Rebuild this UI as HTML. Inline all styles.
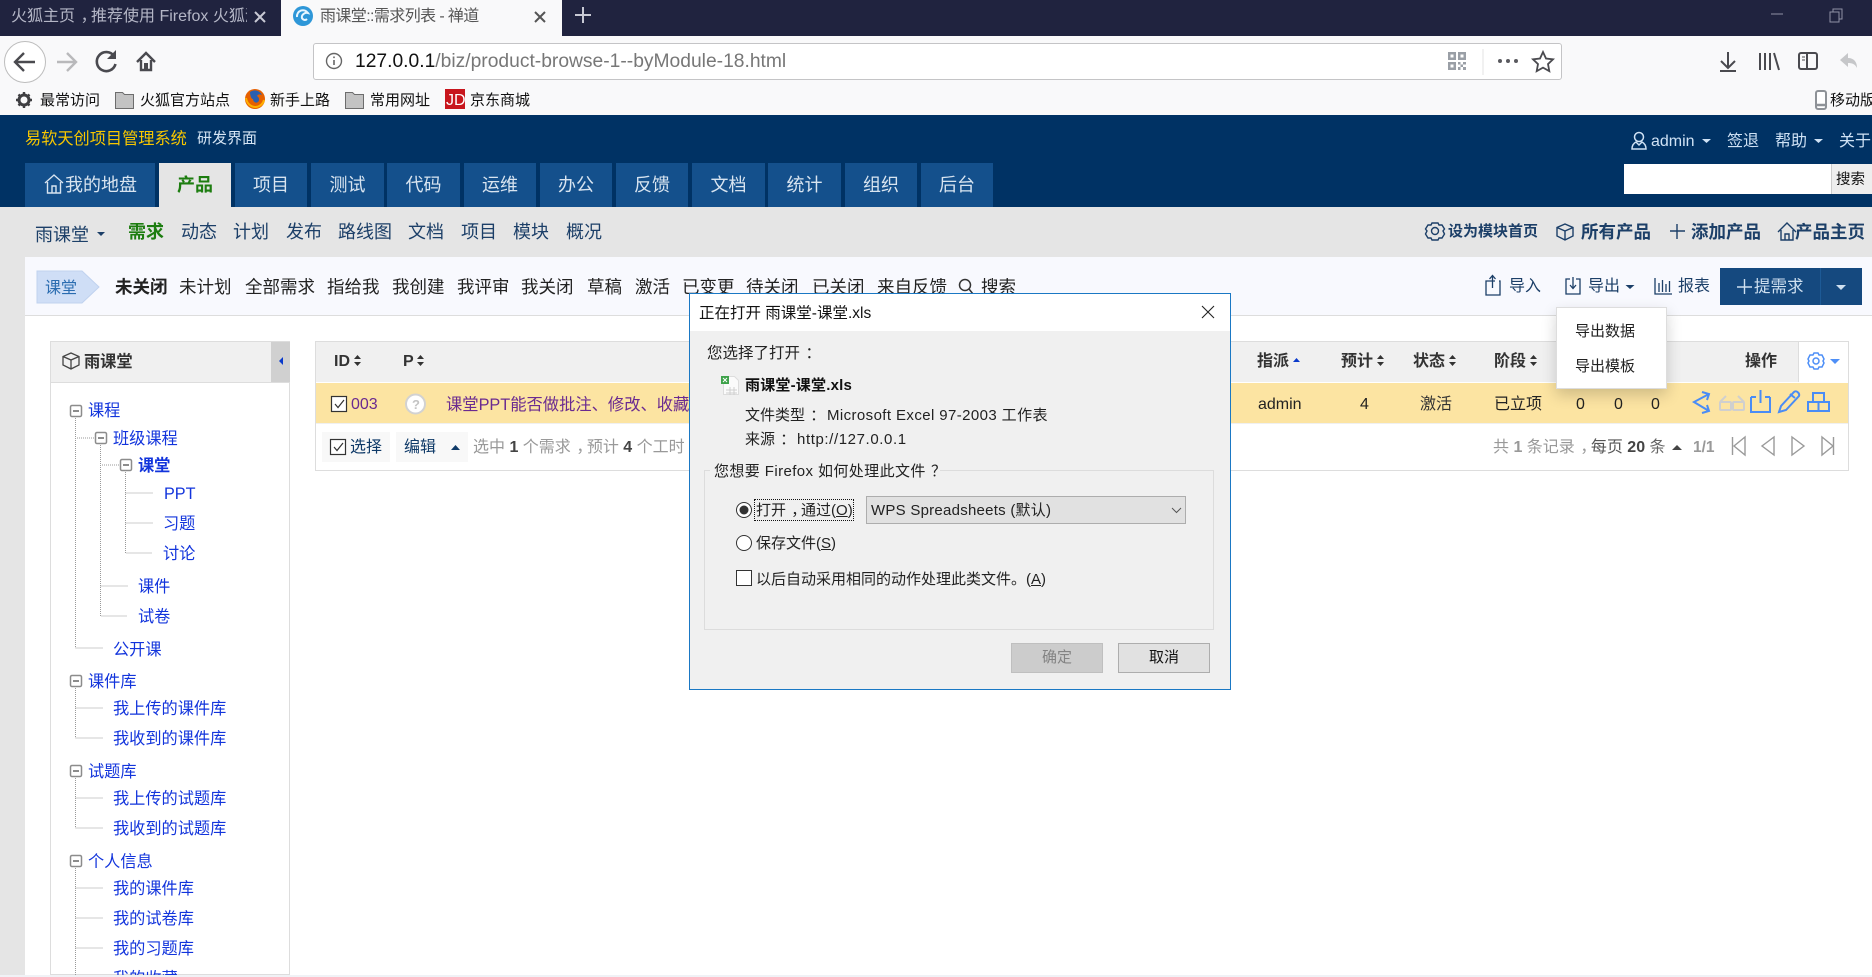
<!DOCTYPE html>
<html lang="zh-CN"><head><meta charset="utf-8"><title>雨课堂::需求列表 - 禅道</title>
<style>
html,body{margin:0;padding:0;width:1872px;height:977px;overflow:hidden;background:#fff}
body{position:relative;font-family:"Liberation Sans","Noto Sans CJK SC",sans-serif;font-size:16px;color:#333}
.b{position:absolute}
.t{position:absolute;white-space:nowrap;line-height:24px;height:24px;transform:translateY(1px)}
.n{background:#14508c;top:163px;height:44px;color:#d8e4f0;font-size:18px;line-height:44px;text-align:center;position:absolute}
.sn{color:#1c3f68;font-size:18px}
.ft{color:#222;font-size:17.5px;top:274px}
.tr{color:#1234dc;font-size:16.2px}
.hd{font-weight:bold;font-size:16px;color:#333;top:349px}
.d{font-size:15px;color:#222}
.bm{font-size:15px;color:#111;top:88px}
.c{display:inline-block;font-style:normal;transform:translateX(.35em)}
svg{position:absolute;left:0;top:0;overflow:visible}
</style></head><body>
<!-- browser chrome -->
<div class="b" style="left:0;top:0;width:1872px;height:36px;background:#20233f"></div>
<div class="b" style="left:281px;top:0;width:281px;height:36px;background:#f9f9fa"></div>
<div class="b" style="left:0;top:36px;width:1872px;height:79px;background:#f9f9fa"></div>
<div class="t" style="left:11px;top:4px;width:236px;overflow:hidden;font-size:16px;color:#b4b6c6">火狐主页<i class="c">，</i>推荐使用 Firefox 火狐浏览器</div>
<div class="t" style="left:320px;top:4px;font-size:16px;letter-spacing:-.6px;color:#555">雨课堂::需求列表 - 禅道</div>
<div class="b" style="left:313px;top:43px;width:1247px;height:35px;background:#fff;border:1px solid #c4c4c6;border-radius:3px"></div>
<div class="t" style="left:355px;top:49px;font-size:19.25px;color:#111">127.0.0.1<span style="color:#777">/biz/product-browse-1--byModule-18.html</span></div>
<div class="t bm" style="left:40px">最常访问</div>
<div class="t bm" style="left:140px">火狐官方站点</div>
<div class="t bm" style="left:270px">新手上路</div>
<div class="t bm" style="left:370px">常用网址</div>
<div class="t bm" style="left:470px">京东商城</div>
<div class="t bm" style="left:1830px">移动版</div>
<!-- header -->
<div class="b" style="left:0;top:115px;width:1872px;height:92px;background:#003264"></div>
<div class="t" style="left:25px;top:126px;font-size:16.2px;color:#f7c600">易软天创项目管理系统</div>
<div class="t" style="left:197px;top:126px;font-size:15px;color:#d6e6f5">研发界面</div>
<div class="t" style="left:1651px;top:129px;font-size:16px;color:#cfe2f5">admin</div>
<div class="t" style="left:1727px;top:129px;font-size:16px;color:#cfe2f5">签退</div>
<div class="t" style="left:1775px;top:129px;font-size:16px;color:#cfe2f5">帮助</div>
<div class="t" style="left:1839px;top:129px;font-size:16px;color:#cfe2f5">关于</div>
<div class="b" style="left:1624px;top:164px;width:207px;height:30px;background:#fff"></div>
<div class="b" style="left:1831px;top:164px;width:41px;height:30px;background:#eee;border-left:1px solid #ccc;box-sizing:border-box"></div>
<div class="t" style="left:1836px;top:167px;font-size:14.5px;color:#111">搜索</div>
<div class="n" style="left:25px;width:130px;text-indent:22px">我的地盘</div>
<div class="n" style="left:159px;width:72px;background:#e5e5e5;color:#1d7d10;font-weight:bold">产品</div>
<div class="n" style="left:235px;width:72px">项目</div>
<div class="n" style="left:311px;width:73px">测试</div>
<div class="n" style="left:387px;width:73px">代码</div>
<div class="n" style="left:464px;width:72px">运维</div>
<div class="n" style="left:540px;width:72px">办公</div>
<div class="n" style="left:616px;width:72px">反馈</div>
<div class="n" style="left:692px;width:73px">文档</div>
<div class="n" style="left:768px;width:73px">统计</div>
<div class="n" style="left:845px;width:72px">组织</div>
<div class="n" style="left:921px;width:72px">后台</div>
<!-- subnav -->
<div class="b" style="left:0;top:207px;width:1872px;height:770px;background:#e5e5e5"></div>
<div class="t sn" style="left:35px;top:222px">雨课堂</div>
<div class="t sn" style="left:128px;top:219px;color:#1d7d10;font-weight:bold">需求</div>
<div class="t sn" style="left:181px;top:219px">动态</div>
<div class="t sn" style="left:233px;top:219px">计划</div>
<div class="t sn" style="left:286px;top:219px">发布</div>
<div class="t sn" style="left:338px;top:219px">路线图</div>
<div class="t sn" style="left:408px;top:219px">文档</div>
<div class="t sn" style="left:461px;top:219px">项目</div>
<div class="t sn" style="left:513px;top:219px">模块</div>
<div class="t sn" style="left:566px;top:219px">概况</div>
<div class="t" style="left:1448px;top:219px;font-size:15px;font-weight:bold;color:#1c3f68">设为模块首页</div>
<div class="t sn" style="left:1581px;top:219px;font-weight:bold;font-size:17.5px">所有产品</div>
<div class="t sn" style="left:1691px;top:219px;font-weight:bold;font-size:17.5px">添加产品</div>
<div class="t sn" style="left:1795px;top:219px;font-weight:bold;font-size:17.5px">产品主页</div>
<!-- main -->
<div class="b" style="left:25px;top:257px;width:1847px;height:59px;background:#f8f9fe;border-bottom:1px solid #ddd;box-sizing:border-box"></div>
<div class="b" style="left:25px;top:316px;width:1847px;height:659px;background:#fff"></div>
<div class="b" style="left:0;top:975px;width:1872px;height:2px;background:#f0f2f6"></div>
<div class="t ft" style="left:115px;font-weight:bold">未关闭</div>
<div class="t ft" style="left:179px">未计划</div>
<div class="t ft" style="left:245px">全部需求</div>
<div class="t ft" style="left:327px">指给我</div>
<div class="t ft" style="left:392px">我创建</div>
<div class="t ft" style="left:457px">我评审</div>
<div class="t ft" style="left:521px">我关闭</div>
<div class="t ft" style="left:587px">草稿</div>
<div class="t ft" style="left:635px">激活</div>
<div class="t ft" style="left:682px">已变更</div>
<div class="t ft" style="left:746px">待关闭</div>
<div class="t ft" style="left:812px">已关闭</div>
<div class="t ft" style="left:877px">来自反馈</div>
<div class="t ft" style="left:981px">搜索</div>
<div class="t" style="left:1509px;top:274px;font-size:16px;color:#1c3f68">导入</div>
<div class="t" style="left:1588px;top:274px;font-size:16px;color:#1c3f68">导出</div>
<div class="t" style="left:1678px;top:274px;font-size:16px;color:#1c3f68">报表</div>
<div class="b" style="left:1720px;top:268px;width:142px;height:37px;background:#15497f"></div>
<div class="t" style="left:1754px;top:274px;font-size:16.5px;color:#cfe0f0">提需求</div>
<!-- sidebar -->
<div class="b" style="left:50px;top:341px;width:240px;height:634px;border:1px solid #ddd;box-sizing:border-box"></div>
<div class="b" style="left:50px;top:341px;width:240px;height:42px;background:#f0f0f0;border:1px solid #ddd;box-sizing:border-box"></div>
<div class="b" style="left:271px;top:342px;width:19px;height:40px;background:#d0d0d0"></div>
<div class="t" style="left:84px;top:349px;font-size:16.2px;font-weight:bold;color:#333">雨课堂</div>
<div class="t tr" style="left:88px;top:398px">课程</div>
<div class="t tr" style="left:113px;top:426px">班级课程</div>
<div class="t tr" style="left:138px;top:453px;font-weight:bold">课堂</div>
<div class="t tr" style="left:164px;top:481px">PPT</div>
<div class="t tr" style="left:163px;top:511px">习题</div>
<div class="t tr" style="left:163px;top:541px">讨论</div>
<div class="t tr" style="left:138px;top:574px">课件</div>
<div class="t tr" style="left:138px;top:604px">试卷</div>
<div class="t tr" style="left:113px;top:637px">公开课</div>
<div class="t tr" style="left:88px;top:669px">课件库</div>
<div class="t tr" style="left:113px;top:696px">我上传的课件库</div>
<div class="t tr" style="left:113px;top:726px">我收到的课件库</div>
<div class="t tr" style="left:88px;top:759px">试题库</div>
<div class="t tr" style="left:113px;top:786px">我上传的试题库</div>
<div class="t tr" style="left:113px;top:816px">我收到的试题库</div>
<div class="t tr" style="left:88px;top:849px">个人信息</div>
<div class="t tr" style="left:113px;top:876px">我的课件库</div>
<div class="t tr" style="left:113px;top:906px">我的试卷库</div>
<div class="t tr" style="left:113px;top:936px">我的习题库</div>
<div class="b" style="left:50px;top:960px;width:240px;height:15px;overflow:hidden"><div class="t tr" style="left:63px;top:6px">我的收藏</div></div>
<!-- table -->
<div class="b" style="left:315px;top:341px;width:1534px;height:130px;border:1px solid #ddd;box-sizing:border-box;background:#fff"></div>
<div class="b" style="left:316px;top:342px;width:1532px;height:40px;background:#f0f0f0"></div>
<div class="b" style="left:1798px;top:342px;width:50px;height:40px;background:#fff;border-left:1px solid #ddd;box-sizing:border-box"></div>
<div class="b" style="left:316px;top:383px;width:1532px;height:40px;background:#fce4a2;border-bottom:1px solid #f0f0f0"></div>
<div class="t hd" style="left:334px">ID</div>
<div class="t hd" style="left:403px">P</div>
<div class="t hd" style="left:1257px">指派</div>
<div class="t hd" style="left:1341px">预计</div>
<div class="t hd" style="left:1413px">状态</div>
<div class="t hd" style="left:1494px">阶段</div>
<div class="t hd" style="left:1745px">操作</div>
<div class="t" style="left:351px;top:392px;font-size:16px;color:#6a2a90">003</div>
<div class="t" style="left:446px;top:392px;font-size:16.3px;color:#6a2a90">课堂PPT能否做批注、修改、收藏</div>
<div class="t" style="left:1258px;top:392px;font-size:16px;color:#222">admin</div>
<div class="t" style="left:1360px;top:392px;font-size:16px;color:#222">4</div>
<div class="t" style="left:1420px;top:392px;font-size:16px;color:#333">激活</div>
<div class="t" style="left:1494px;top:392px;font-size:16px;color:#222">已立项</div>
<div class="t" style="left:1576px;top:392px;font-size:16px;color:#222">0</div>
<div class="t" style="left:1614px;top:392px;font-size:16px;color:#222">0</div>
<div class="t" style="left:1651px;top:392px;font-size:16px;color:#222">0</div>
<div class="b" style="left:322px;top:432px;width:68px;height:30px;background:#f8f8f8"></div>
<div class="b" style="left:396px;top:432px;width:72px;height:30px;background:#f8f8f8"></div>
<div class="t" style="left:350px;top:435px;font-size:16px;color:#0f3a68">选择</div>
<div class="t" style="left:404px;top:435px;font-size:16px;color:#0f3a68">编辑</div>
<div class="t" style="left:473px;top:435px;font-size:16px;color:#999">选中 <b style="color:#444">1</b> 个需求<i class="c">，</i>预计 <b style="color:#444">4</b> 个工时</div>
<div class="t" style="left:1493px;top:435px;font-size:16px;color:#999">共 <b>1</b> 条记录<i class="c">，</i><span style="color:#555">每页</span> <b style="color:#444">20</b> <span style="color:#666">条</span></div>
<div class="t" style="left:1693px;top:435px;font-size:15.5px;font-weight:bold;color:#999">1/1</div>
<!-- icons layer -->
<svg width="1872" height="977" viewBox="0 0 1872 977" fill="none">
 <!-- tab strip -->
 <g stroke="#c8c9d4" stroke-width="2"><path d="M255 12l10 10M265 12l-10 10"/></g>
 <g stroke="#555" stroke-width="2"><path d="M535 12l10 10M545 12l-10 10"/></g>
 <path d="M583 7v16M575 15h16" stroke="#c8c9d4" stroke-width="2"/>
 <circle cx="303" cy="16" r="10" fill="#2e97d8"/><path d="M297 17a6 6 0 0 1 11-4a5 5 0 0 0-6 3a3 3 0 0 0 5 3" stroke="#e8f6ff" stroke-width="2"/>
 <path d="M1771 14h12" stroke="#8f91a6" stroke-width="1"/>
 <path d="M1830 12h9v10h-9zM1833 12v-3h9v10h-3" stroke="#8f91a6" stroke-width="1"/>
 <!-- toolbar -->
 <circle cx="25" cy="62" r="20.5" fill="#fff" stroke="#bdbdbd"/>
 <path d="M16 62h19M24 53l-9 9 9 9" stroke="#4a4a4f" stroke-width="2.4"/>
 <path d="M57 62h18M67 53l9 9-9 9" stroke="#b9b9bb" stroke-width="2.4"/>
 <path d="M114 56a9.5 9.5 0 1 0 1.5 8" stroke="#4a4a4f" stroke-width="2.6"/><path d="M116 50v9h-9z" fill="#4a4a4f"/>
 <path d="M137 62l9-9 9 9M141 60v10h10V60" stroke="#4a4a4f" stroke-width="2.4"/><rect x="144" y="63" width="4" height="7" fill="#4a4a4f"/>
 <circle cx="334" cy="61" r="7.5" stroke="#666" stroke-width="1.4"/><path d="M334 60v5M334 56.500v1.600" stroke="#666" stroke-width="1.6"/>
 <g fill="#9a9fa6"><rect x="1448" y="52" width="8" height="8"/><rect x="1458" y="52" width="8" height="8"/><rect x="1448" y="62" width="8" height="8"/><rect x="1458" y="62" width="2.500" height="2.500"/><rect x="1463" y="62" width="3" height="2.500"/><rect x="1460.500" y="64.500" width="2.500" height="2.500"/><rect x="1458" y="67" width="2.500" height="3"/><rect x="1463" y="67" width="3" height="3"/></g>
 <g fill="#fff"><rect x="1450.500" y="54.500" width="3" height="3"/><rect x="1460.500" y="54.500" width="3" height="3"/><rect x="1450.500" y="64.500" width="3" height="3"/></g>
 <path d="M1483 49v26" stroke="#e3e3e3"/>
 <g fill="#5a5a5f"><circle cx="1500" cy="61" r="2"/><circle cx="1508" cy="61" r="2"/><circle cx="1516" cy="61" r="2"/></g>
 <path d="M1543 52l3 6.500 7 .8-5 4.800 1.300 7-6.300-3.500-6.300 3.500 1.300-7-5-4.800 7-.8z" stroke="#4a4a4f" stroke-width="1.800"/>
 <path d="M1728 52v16M1721 61l7 7 7-7M1720 71h16" stroke="#4a4a4f" stroke-width="2"/>
 <path d="M1760 53v17M1765 53v17M1770 53v17M1774 53l5 17" stroke="#4a4a4f" stroke-width="2"/>
 <rect x="1799" y="53" width="18" height="16" rx="2" stroke="#4a4a4f" stroke-width="2"/><path d="M1807 53v16" stroke="#4a4a4f" stroke-width="2"/><path d="M1802 57h3M1802 60h3" stroke="#4a4a4f"/>
 <path d="M1848 53l-8 7 8 7v-4c4 0 7 1 9 5 0-6-3-10-9-10z" fill="#c6c7c9"/>
 <!-- bookmarks -->
 <circle cx="24" cy="100" r="5" stroke="#3f3f42" stroke-width="3"/><path d="M24 92v3M24 105v3M16 100h3M29 100h3M18.500 94.500l2 2M27.500 103.500l2 2M18.500 105.500l2-2M27.500 96.500l2-2" stroke="#3f3f42" stroke-width="2.400"/>
 <g fill="#c3c3c3" stroke="#6d6d6d"><path d="M115.500 92.500h7l2 2h9v14h-18z"/><path d="M345.500 92.500h7l2 2h9v14h-18z"/></g>
 <circle cx="255" cy="99" r="10" fill="#e66000"/><path d="M250 92a8 8 0 0 1 12 3c-2-1-4-1-5 1 2 1 3 4 1 6-2 1.500-5 0-5-3-2 0-3-4-3-7z" fill="#2b5fb0"/><path d="M246 98c1 6 5 9 10 9a9 9 0 0 0 8-7" stroke="#ffb000" stroke-width="2"/>
 <rect x="445" y="89" width="20" height="20" fill="#c8161d"/>
 <text x="446" y="105" font-size="16" fill="#fff" font-family="Liberation Sans">JD</text>
 <rect x="1816" y="91" width="10" height="18" rx="2" fill="#fff" stroke="#8e9297" stroke-width="2"/><path d="M1817 105h8" stroke="#8e9297" stroke-width="2.500"/>
 <!-- header right -->
 <circle cx="1639" cy="137" r="4.500" stroke="#cfe2f5" stroke-width="1.500"/><path d="M1632 149c0-4 2-6 4-7l3 3 3-3c2 1 4 3 4 7z" stroke="#cfe2f5" stroke-width="1.500"/>
 <path d="M1702 139h9l-4.500 4z" fill="#cfe2f5"/><path d="M1814 139h9l-4.500 4z" fill="#cfe2f5"/>
 <path d="M45 183l9-8 9 8M47.500 182v11h13v-11M52 193v-7h4v7" stroke="#d8e4f0" stroke-width="1.400"/>
 <path d="M97 232h8l-4 4z" fill="#1c3f68"/>
 <!-- subnav right -->
 <g stroke="#1c3f68" stroke-width="1.400">
  <circle cx="1435" cy="231" r="3.500"/><path d="M1432 223h6l1 2 3 0 2.500 4-1.500 2 1.500 3-2.500 4-3 0-1 2h-6l-1-2-3 0-2.500-4 1.500-3-1.500-2 2.500-4 3 0z"/>
  <path d="M1565 224l8 3.500v8.500l-8 4-8-4v-8.500zM1557 227.500l8 3.500 8-3.500M1565 231v9"/>
  <path d="M1670 231h15M1677 224v15"/>
  <path d="M1778 232l9-9 9 9M1781 230v10h12v-10M1785 240v-6h4v6"/>
 </g>
 <!-- feature bar -->
 <path d="M37 271h45l17 16-17 16h-45z" fill="#cfdef6" stroke="#c0d2ef"/>
 <text x="45" y="293" font-size="16" fill="#2a6cb0" font-family="Liberation Sans,Noto Sans CJK SC,sans-serif">课堂</text>
 <circle cx="965" cy="285" r="5.500" stroke="#333" stroke-width="1.500"/><path d="M969 289l4 5" stroke="#333" stroke-width="1.500"/>
 <g stroke="#1c3f68" stroke-width="1.300">
  <path d="M1495 281h-9v14h14v-14h-1M1492.500 288v-12M1489.500 279l3-3.500 3 3.500"/>
  <path d="M1570 279h-4v15h14v-15h-4M1573 277v11M1570 285l3 3.500 3-3.500"/>
  <path d="M1655 278v16h17M1659 292v-9M1662.500 292v-12M1666 292v-8M1669.500 292v-11"/>
 </g>
 <path d="M1625.500 285h9l-4.500 4z" fill="#1c3f68"/>
 <path d="M1820.500 268v37" stroke="#1d5a96"/>
 <path d="M1737 287h15M1744.500 279v15" stroke="#cfe0f0" stroke-width="1.400"/>
 <path d="M1836 285h10l-5 5z" fill="#cfe0f0"/>
 <!-- sidebar -->
 <path d="M71 353l8 3.500v8.500l-8 4-8-4v-8.500zM63 356.500l8 3.500 8-3.500M71 360v9" stroke="#444" stroke-width="1.300"/>
 <path d="M283 357v8l-4-4z" fill="#0a3acb"/>
 <g stroke="#999" stroke-dasharray="1 1">
  <path d="M75.500 418v230h28M77 438h19"/>
  <path d="M100.500 445v171h27M100.500 586h27M102 465h19"/>
  <path d="M125.500 472v81h27M125.500 493h27M125.500 523h27"/>
  <path d="M75.500 688v50h28M75.500 708h28"/>
  <path d="M75.500 778v50h28M75.500 798h28"/>
  <path d="M75.500 868v107M75.500 888h28M75.500 918h28M75.500 948h28"/>
 </g>
 <g fill="#fff" stroke="#8c8c8c" stroke-width="1.500">
  <rect x="70.500" y="405.500" width="11" height="11" rx="1.500"/><rect x="95.500" y="432.500" width="11" height="11" rx="1.500"/><rect x="120.500" y="459.500" width="11" height="11" rx="1.500"/>
  <rect x="70.500" y="675.500" width="11" height="11" rx="1.500"/><rect x="70.500" y="765.500" width="11" height="11" rx="1.500"/><rect x="70.500" y="855.500" width="11" height="11" rx="1.500"/>
 </g>
 <path d="M73 411h6M98 438h6M123 465h6M73 681h6M73 771h6M73 861h6" stroke="#666" stroke-width="1.500"/>
 <!-- table -->
 <g fill="#333">
  <path d="M354 359l3.500-4 3.500 4zM354 362l3.500 4 3.500-4zM417 359l3.500-4 3.500 4zM417 362l3.500 4 3.500-4zM1377 359l3.500-4 3.500 4zM1377 362l3.500 4 3.500-4zM1449 359l3.500-4 3.500 4zM1449 362l3.500 4 3.500-4zM1530 359l3.500-4 3.500 4zM1530 362l3.500 4 3.500-4z"/>
 </g>
 <path d="M1293 362l3.500-4 3.500 4z" fill="#0a3acb"/>
 <g stroke="#4e8ff7" stroke-width="1.500"><circle cx="1816" cy="361" r="3"/><path d="M1814 353h4l1 2 3 0 2 4-1 2 1 2-2 4-3 0-1 2h-4l-1-2-3 0-2-4 1-2-1-2 2-4 3 0z"/></g>
 <path d="M1830 359h10l-5 5z" fill="#4e8ff7"/>
 <rect x="331.500" y="396.500" width="15" height="15" fill="#fff" stroke="#333" stroke-width="1.200"/><path d="M335 404l3 3.500 6-7.500" stroke="#333" stroke-width="1.200"/>
 <circle cx="415.500" cy="404" r="9.500" fill="#fff" stroke="#d2d2d2" stroke-width="2"/>
 <text x="412" y="409" font-size="13" font-weight="bold" fill="#c4c4c4" font-family="Liberation Sans">?</text>
 <g stroke="#4a8cf5" stroke-width="2">
  <path d="M1709 394l-15 8 15 9M1702 392l7 2-2 6M1702 413l7-2-2-6"/>
  <path d="M1751 397h5M1765 397h5M1751 397v15h19v-15M1760.500 390v13"/>
  <path d="M1779 412l2-6 13-14c2-2 6 1 5 4l-13 14zM1790 394l5 4"/>
  <path d="M1813 393h11v9h-11zM1808 402h21v9h-21zM1818.500 402v9"/>
 </g>
 <g stroke="#cfcfcf" stroke-width="2"><rect x="1720" y="402" width="11" height="8" rx="1"/><rect x="1733" y="402" width="11" height="8" rx="1"/><path d="M1731 404h2M1720 402l6-6M1744 402l-6-6"/></g>
 <rect x="330.500" y="439.500" width="15" height="15" fill="#fff" stroke="#333" stroke-width="1.200"/><path d="M334 447l3 3.500 6-7.500" stroke="#333" stroke-width="1.200"/>
 <path d="M451 450l4.500-5 4.500 5z" fill="#0f3a68"/>
 <path d="M1672 450l5-5 5 5z" fill="#444"/>
 <g stroke="#9a9a9a" stroke-width="1.400">
  <path d="M1732.500 437v18M1745 437l-11 9 11 9zM1774 437l-12 9 12 9zM1792 437l12 9-12 9zM1822 437l11 9-11 9zM1833.500 437v18"/>
 </g>
</svg>
<!-- dropdown -->
<div class="b" style="left:1556px;top:307px;width:111px;height:82px;background:#fff;border:1px solid #ddd;box-sizing:border-box;box-shadow:0 6px 14px rgba(0,0,0,.18)"></div>
<div class="t" style="left:1575px;top:319px;font-size:15px;color:#222">导出数据</div>
<div class="t" style="left:1575px;top:354px;font-size:15px;color:#222">导出模板</div>
<!-- dialog -->
<div class="b" style="left:689px;top:293px;width:542px;height:397px;background:#f0f0f0;border:1px solid #1a78c4;box-sizing:border-box"></div>
<div class="b" style="left:690px;top:294px;width:540px;height:37px;background:#fff"></div>
<div class="t" style="left:699px;top:301px;font-size:15.5px;color:#111">正在打开 雨课堂-课堂.xls</div>
<div class="t d" style="left:707px;top:341px;font-size:15.500px">您选择了打开<i class="c">：</i></div>
<div class="t d" style="left:745px;top:373px;font-weight:bold;color:#111;letter-spacing:.2px">雨课堂-课堂.xls</div>
<div class="t d" style="left:745px;top:403px">文件类型<i class="c">：</i></div>
<div class="t d" style="left:827px;top:403px;letter-spacing:.4px">Microsoft Excel 97-2003 工作表</div>
<div class="t d" style="left:745px;top:427px">来源<i class="c">：</i></div>
<div class="t d" style="left:797px;top:427px;letter-spacing:.6px">http://127.0.0.1</div>
<div class="b" style="left:704px;top:470px;width:510px;height:160px;border:1px solid #dcdcdc;box-sizing:border-box"></div>
<div class="b" style="left:710px;top:462px;width:230px;height:18px;background:#f0f0f0"></div>
<div class="t d" style="left:714px;top:459px;letter-spacing:.4px">您想要 Firefox 如何处理此文件<i class="c">？</i></div>
<div class="b" style="left:754px;top:499px;width:100px;height:22px;border:1px dotted #111;box-sizing:border-box"></div>
<div class="t d" style="left:756px;top:498px">打开<i class="c">，</i>通过(<u>O</u>)</div>
<div class="b" style="left:866px;top:496px;width:320px;height:28px;background:#e1e1e1;border:1px solid #adadad;box-sizing:border-box"></div>
<div class="t d" style="left:871px;top:498px;letter-spacing:.25px">WPS Spreadsheets (默认)</div>
<div class="t d" style="left:756px;top:531px">保存文件(<u>S</u>)</div>
<div class="b" style="left:736px;top:570px;width:16px;height:16px;background:#fff;border:1px solid #333;box-sizing:border-box"></div>
<div class="t d" style="left:756px;top:567px">以后自动采用相同的动作处理此类文件。(<u>A</u>)</div>
<div class="b" style="left:1011px;top:643px;width:92px;height:30px;background:#ccc;border:1px solid #bfbfbf;box-sizing:border-box;text-align:center;line-height:28px;font-size:15px;color:#838383">确定</div>
<div class="b" style="left:1118px;top:643px;width:92px;height:30px;background:#e1e1e1;border:1px solid #adadad;box-sizing:border-box;text-align:center;line-height:28px;font-size:15px;color:#111">取消</div>
<svg width="1872" height="977" viewBox="0 0 1872 977" fill="none">
 <path d="M1202 306l12 12M1214 306l-12 12" stroke="#222" stroke-width="1.100"/>
 <path d="M723.500 376.500h11l4 4v14h-15z" fill="#fbfbfb" stroke="#ddd"/>
 <rect x="721" y="376" width="8" height="8" fill="#3ea24a"/><path d="M723 378l4 4M727 378l-4 4" stroke="#fff"/>
 <path d="M726 390h11M726 393h11M730 387v8M734 387v8" stroke="#cfcfcf"/>
 <circle cx="744" cy="510" r="7.500" fill="#fff" stroke="#333"/><circle cx="744" cy="510" r="4.500" fill="#333"/>
 <circle cx="744" cy="543" r="7.500" fill="#fff" stroke="#333"/>
 <path d="M1172 508l4.500 4.500 4.500-4.500" stroke="#555"/>
</svg>
</body></html>
